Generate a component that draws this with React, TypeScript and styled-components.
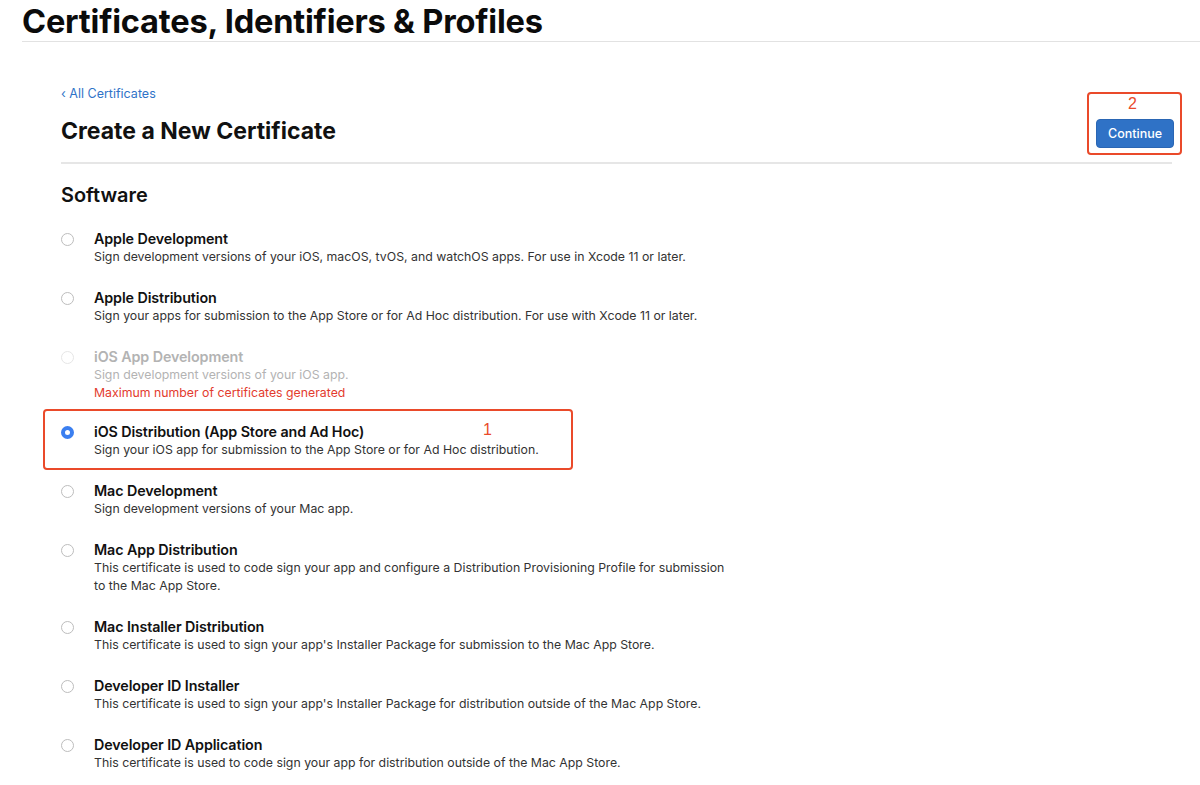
import React from "react";
import styled, { createGlobalStyle } from "styled-components";

const Global = createGlobalStyle`
  html, body { margin: 0; padding: 0; background: #fff; }
  body { font-family: "Inter", "Liberation Sans", Arial, sans-serif; color: #111; }
`;

const Page = styled.div`
  width: 1200px;
  height: 785px;
  overflow: hidden;
  background: #fff;
`;

const Header = styled.header`
  margin-left: 22px;
  border-bottom: 1px solid #e2e2e2;
  height: 42px;
  box-sizing: border-box;
`;

const PageTitle = styled.h1`
  margin: 0;
  font-size: 32.6px;
  font-weight: 700;
  line-height: 42px;
  letter-spacing: -0.2px;
  color: #0b0b0b;
`;

const Main = styled.main`
  padding: 44px 28px 0 61px;
`;

const TopBar = styled.div`
  display: flex;
  justify-content: space-between;
  align-items: flex-end;
  border-bottom: 2px solid #e6e6e6;
  padding-bottom: 16px;
`;

const TitleBlock = styled.div`
  display: flex;
  flex-direction: column;
`;

const BackLink = styled.a`
  font-size: 12.5px;
  color: #2f73c8;
  text-decoration: none;
  line-height: 16px;
`;

const SubTitle = styled.h2`
  margin: 14px 0 0;
  font-size: 23px;
  font-weight: 700;
  line-height: 30px;
  color: #111;
`;

const Frame = styled.div`
  border: 2px solid #ea4a2a;
  border-radius: 4px;
  box-sizing: border-box;
`;

const Marker = styled.span`
  position: absolute;
  color: #ea4a2a;
  font-size: 16px;
  font-family: "Liberation Sans", Arial, sans-serif;
  line-height: 18px;
`;

const ButtonFrame = styled(Frame)`
  position: relative;
  width: 95px;
  height: 63px;
  margin-right: -10px;
  margin-bottom: -9px;
  display: flex;
  flex-direction: column;
  align-items: center;
  justify-content: flex-end;
  padding: 0 0 5px 1px;
`;

const ContinueButton = styled.button`
  width: 78px;
  height: 29px;
  border: 1px solid #2a66b4;
  border-radius: 4px;
  background: #2f72c6;
  color: #fff;
  font-family: "Inter", "Liberation Sans", Arial, sans-serif;
  font-size: 12.5px;
  font-weight: 500;
  padding: 0;
`;

const SectionTitle = styled.h3`
  margin: 18px 0 0;
  font-size: 19.9px;
  font-weight: 600;
  line-height: 26px;
  color: #111;
`;

const List = styled.div`
  display: flex;
  flex-direction: column;
  margin-top: 22px;
`;

const Option = styled.label<{ $disabled?: boolean }>`
  position: relative;
  display: flex;
  align-items: flex-start;
  gap: 20px;
  padding-bottom: 23px;
  color: ${(p) => (p.$disabled ? "#b3b3b3" : "#111")};
`;

const OptionFrame = styled(Frame)`
  position: absolute;
  top: -14px;
  left: -18px;
  width: 530px;
  height: 61px;
  pointer-events: none;
`;

const Radio = styled.span<{ $checked?: boolean; $disabled?: boolean }>`
  flex: none;
  width: 13px;
  height: 13px;
  margin-top: 3px;
  border-radius: 50%;
  box-sizing: border-box;
  border: ${(p) =>
    p.$checked ? "4.5px solid #3b7ff0" : p.$disabled ? "1px solid #e6e6e6" : "1px solid #bdbdbd"};
  background: #fff;
`;

const OptionText = styled.div`
  display: flex;
  flex-direction: column;
`;

const OptionTitle = styled.div`
  font-size: 14.3px;
  font-weight: 600;
  line-height: 18px;
  letter-spacing: -0.1px;
`;

const OptionDesc = styled.div<{ $disabled?: boolean; $error?: boolean }>`
  font-size: 12.3px;
  line-height: 18px;
  max-width: 640px;
  color: ${(p) => (p.$error ? "#e33b2e" : p.$disabled ? "#b3b3b3" : "#333")};
  ${(p) => (p.$error ? "margin-bottom: -2px;" : "")}
`;

type Item = {
  title: string;
  desc: string;
  disabled?: boolean;
  error?: string;
  checked?: boolean;
};

const items: Item[] = [
  {
    title: "Apple Development",
    desc: "Sign development versions of your iOS, macOS, tvOS, and watchOS apps. For use in Xcode 11 or later.",
  },
  {
    title: "Apple Distribution",
    desc: "Sign your apps for submission to the App Store or for Ad Hoc distribution. For use with Xcode 11 or later.",
  },
  {
    title: "iOS App Development",
    desc: "Sign development versions of your iOS app.",
    disabled: true,
    error: "Maximum number of certificates generated",
  },
  {
    title: "iOS Distribution (App Store and Ad Hoc)",
    desc: "Sign your iOS app for submission to the App Store or for Ad Hoc distribution.",
    checked: true,
  },
  { title: "Mac Development", desc: "Sign development versions of your Mac app." },
  {
    title: "Mac App Distribution",
    desc: "This certificate is used to code sign your app and configure a Distribution Provisioning Profile for submission to the Mac App Store.",
  },
  {
    title: "Mac Installer Distribution",
    desc: "This certificate is used to sign your app's Installer Package for submission to the Mac App Store.",
  },
  {
    title: "Developer ID Installer",
    desc: "This certificate is used to sign your app's Installer Package for distribution outside of the Mac App Store.",
  },
  {
    title: "Developer ID Application",
    desc: "This certificate is used to code sign your app for distribution outside of the Mac App Store.",
  },
];

export default function App() {
  return (
    <Page>
      <Global />
      <Header>
        <PageTitle>Certificates, Identifiers &amp; Profiles</PageTitle>
      </Header>
      <Main>
        <TopBar>
          <TitleBlock>
            <BackLink href="#">‹ All Certificates</BackLink>
            <SubTitle>Create a New Certificate</SubTitle>
          </TitleBlock>
          <ButtonFrame>
            <Marker style={{ top: 1, left: 39 }}>2</Marker>
            <ContinueButton>Continue</ContinueButton>
          </ButtonFrame>
        </TopBar>
        <SectionTitle>Software</SectionTitle>
        <List>
          {items.map((it) => (
            <Option key={it.title} $disabled={it.disabled}>
              {it.checked && (
                <OptionFrame>
                  <Marker style={{ top: 10, left: 438 }}>1</Marker>
                </OptionFrame>
              )}
              <Radio $checked={it.checked} $disabled={it.disabled} />
              <OptionText>
                <OptionTitle>{it.title}</OptionTitle>
                <OptionDesc $disabled={it.disabled}>{it.desc}</OptionDesc>
                {it.error && <OptionDesc $error>{it.error}</OptionDesc>}
              </OptionText>
            </Option>
          ))}
        </List>
      </Main>
    </Page>
  );
}
